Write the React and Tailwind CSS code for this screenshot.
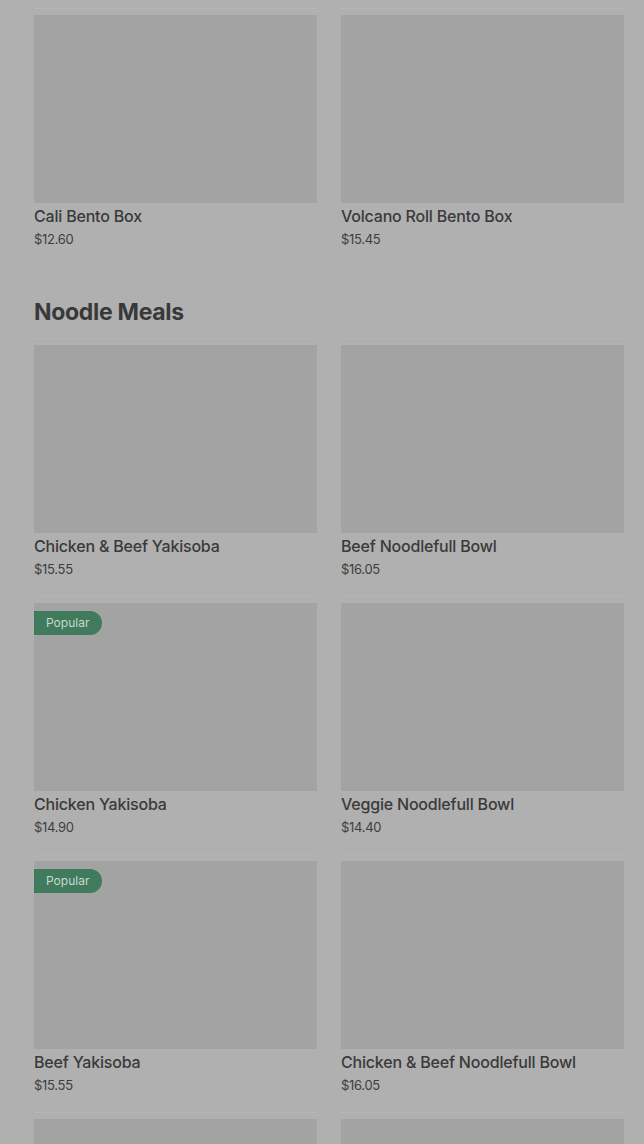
const bento = [
  { name: 'Cali Bento Box', price: '$12.60' },
  { name: 'Volcano Roll Bento Box', price: '$15.45' },
];

const noodles = [
  { name: 'Chicken & Beef Yakisoba', price: '$15.55' },
  { name: 'Beef Noodlefull Bowl', price: '$16.05' },
  { name: 'Chicken Yakisoba', price: '$14.90', popular: true },
  { name: 'Veggie Noodlefull Bowl', price: '$14.40' },
  { name: 'Beef Yakisoba', price: '$15.55', popular: true },
  { name: 'Chicken & Beef Noodlefull Bowl', price: '$16.05' },
  { name: '', price: '' },
  { name: '', price: '' },
];

function ItemCard({ item }) {
  return (
    <div className="h-[258px] border-t border-[#b5b5b5] pt-[6px]">
      <div className="relative h-[188px] bg-[#a3a3a3]">
        {item.popular && (
          <span className="absolute left-0 top-[8px] flex h-[24px] items-center rounded-r-full bg-[#3f7b5c] pl-3 pr-[13px] text-[12px] text-[#c9d8d0]">
            Popular
          </span>
        )}
      </div>
      {item.name && (
        <>
          <p className="mt-[3px] text-[16px] leading-[20px] font-medium tracking-[-0.2px] text-[#3a3a3a]">{item.name}</p>
          <p className="mt-[3px] text-[13px] leading-[20px] tracking-[-0.3px] text-[#3e3e3e]">{item.price}</p>
        </>
      )}
    </div>
  );
}

export default function App() {
  return (
    <div
      className="h-[1144px] overflow-hidden bg-[#b0b0b0] pl-[34px] pr-[20px] pt-[8px]"
      style={{ fontFamily: 'Inter, "Noto Sans", sans-serif' }}
    >
      <div className="grid grid-cols-2 gap-x-6">
        {bento.map((item) => (
          <ItemCard key={item.name} item={item} />
        ))}
      </div>

      <h2 className="mt-[30px] mb-[10px] text-[23px] leading-[32px] font-bold tracking-[-0.3px] text-[#393939]">
        Noodle Meals
      </h2>

      <div className="grid grid-cols-2 gap-x-6">
        {noodles.map((item, i) => (
          <ItemCard key={i} item={item} />
        ))}
      </div>
    </div>
  );
}
